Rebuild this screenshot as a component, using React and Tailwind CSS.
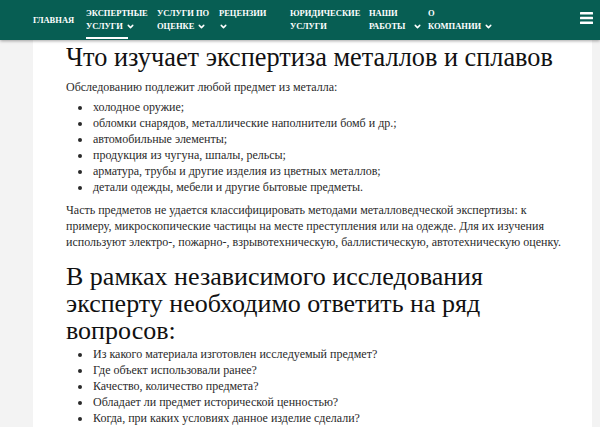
import { ChevronDown } from "lucide-react";

const NAV = [
  { lines: ["ГЛАВНАЯ"], w: "w-[53px]" },
  { lines: ["ЭКСПЕРТНЫЕ", "УСЛУГИ"], drop: true, active: true, w: "w-[71px]" },
  { lines: ["УСЛУГИ ПО", "ОЦЕНКЕ"], drop: true, w: "w-[62px]" },
  { lines: ["РЕЦЕНЗИИ", ""], drop: true, w: "w-[71px]" },
  { lines: ["ЮРИДИЧЕСКИЕ", "УСЛУГИ"], w: "w-[79px]" },
  { lines: ["НАШИ", "РАБОТЫ"], drop: true, wide: true, w: "w-[59px]" },
  { lines: ["О", "КОМПАНИИ"], drop: true, w: "w-[62px]" },
];

const items1 = [
  "холодное оружие;",
  "обломки снарядов, металлические наполнители бомб и др.;",
  "автомобильные элементы;",
  "продукция из чугуна, шпалы, рельсы;",
  "арматура, трубы и другие изделия из цветных металлов;",
  "детали одежды, мебели и другие бытовые предметы.",
];

const items2 = [
  "Из какого материала изготовлен исследуемый предмет?",
  "Где объект использовали ранее?",
  "Качество, количество предмета?",
  "Обладает ли предмет исторической ценностью?",
  "Когда, при каких условиях данное изделие сделали?",
];

function NavItem({ item }) {
  const last = item.lines.length - 1;
  return (
    <div className={`relative flex h-full shrink-0 flex-col justify-center ${item.w}`}>
      {item.lines.map((l, i) => (
        <span key={i} className="flex h-[13px] items-center gap-[3px] whitespace-nowrap">
          {l}
          {item.drop && i === last && (
            <ChevronDown size={9} strokeWidth={4} className={`shrink-0 ${item.wide ? "ml-[5px]" : ""}`} />
          )}
        </span>
      ))}
      {item.active && <div className="absolute bottom-[1px] left-0 h-[2px] w-[42px] bg-white" />}
    </div>
  );
}

export default function App() {
  return (
    <div className="min-h-[427px] bg-[#f3f3f3] font-['Liberation_Serif',serif] text-[#2a2a2a]">
      <header className="relative z-10 flex h-[40px] items-center bg-[#075e53] pl-[33px] pr-[7px] text-[8.5px] font-bold text-white shadow-[0_1px_3px_rgba(0,0,0,0.35)]">
        <nav className="flex h-full">
          {NAV.map((n, i) => (
            <NavItem key={i} item={n} />
          ))}
        </nav>
        <svg width="13" height="12" viewBox="0 0 13 12" className="mb-[4px] ml-auto" fill="white">
          <rect x="0" y="0" width="13" height="2.4" rx="0.5" />
          <rect x="0" y="4.8" width="13" height="2.4" rx="0.5" />
          <rect x="0" y="9.6" width="13" height="2.4" rx="0.5" />
        </svg>
      </header>
      <main className="ml-[33px] mr-[8px] bg-white pl-[33px] pr-[10px] pt-[2px] pb-[20px]">
        <h1 className="text-[26.3px] leading-[32px] text-[#111]">Что изучает экспертиза металлов и сплавов</h1>
        <p className="mt-[5px] text-[12px] leading-[16px]">Обследованию подлежит любой предмет из металла:</p>
        <ul className="mt-[4px] list-disc pl-[26px] text-[12px] leading-[16px]">
          {items1.map((t) => (
            <li key={t} className="pl-[1px]">{t}</li>
          ))}
        </ul>
        <p className="mt-[7px] text-[12px] leading-[16px]">
          Часть предметов не удается классифицировать методами металловедческой экспертизы: к
          <br />
          примеру, микроскопические частицы на месте преступления или на одежде. Для их изучения
          <br />
          используют электро-, пожарно-, взрывотехническую, баллистическую, автотехническую оценку.
        </p>
        <h2 className="mt-[13px] text-[26px] leading-[27px] text-[#111]">
          В рамках независимого исследования
          <br />
          эксперту необходимо ответить на ряд
          <br />
          вопросов:
        </h2>
        <ul className="mt-[2px] list-disc pl-[26px] text-[12px] leading-[16px]">
          {items2.map((t) => (
            <li key={t} className="pl-[1px]">{t}</li>
          ))}
        </ul>
      </main>
    </div>
  );
}
